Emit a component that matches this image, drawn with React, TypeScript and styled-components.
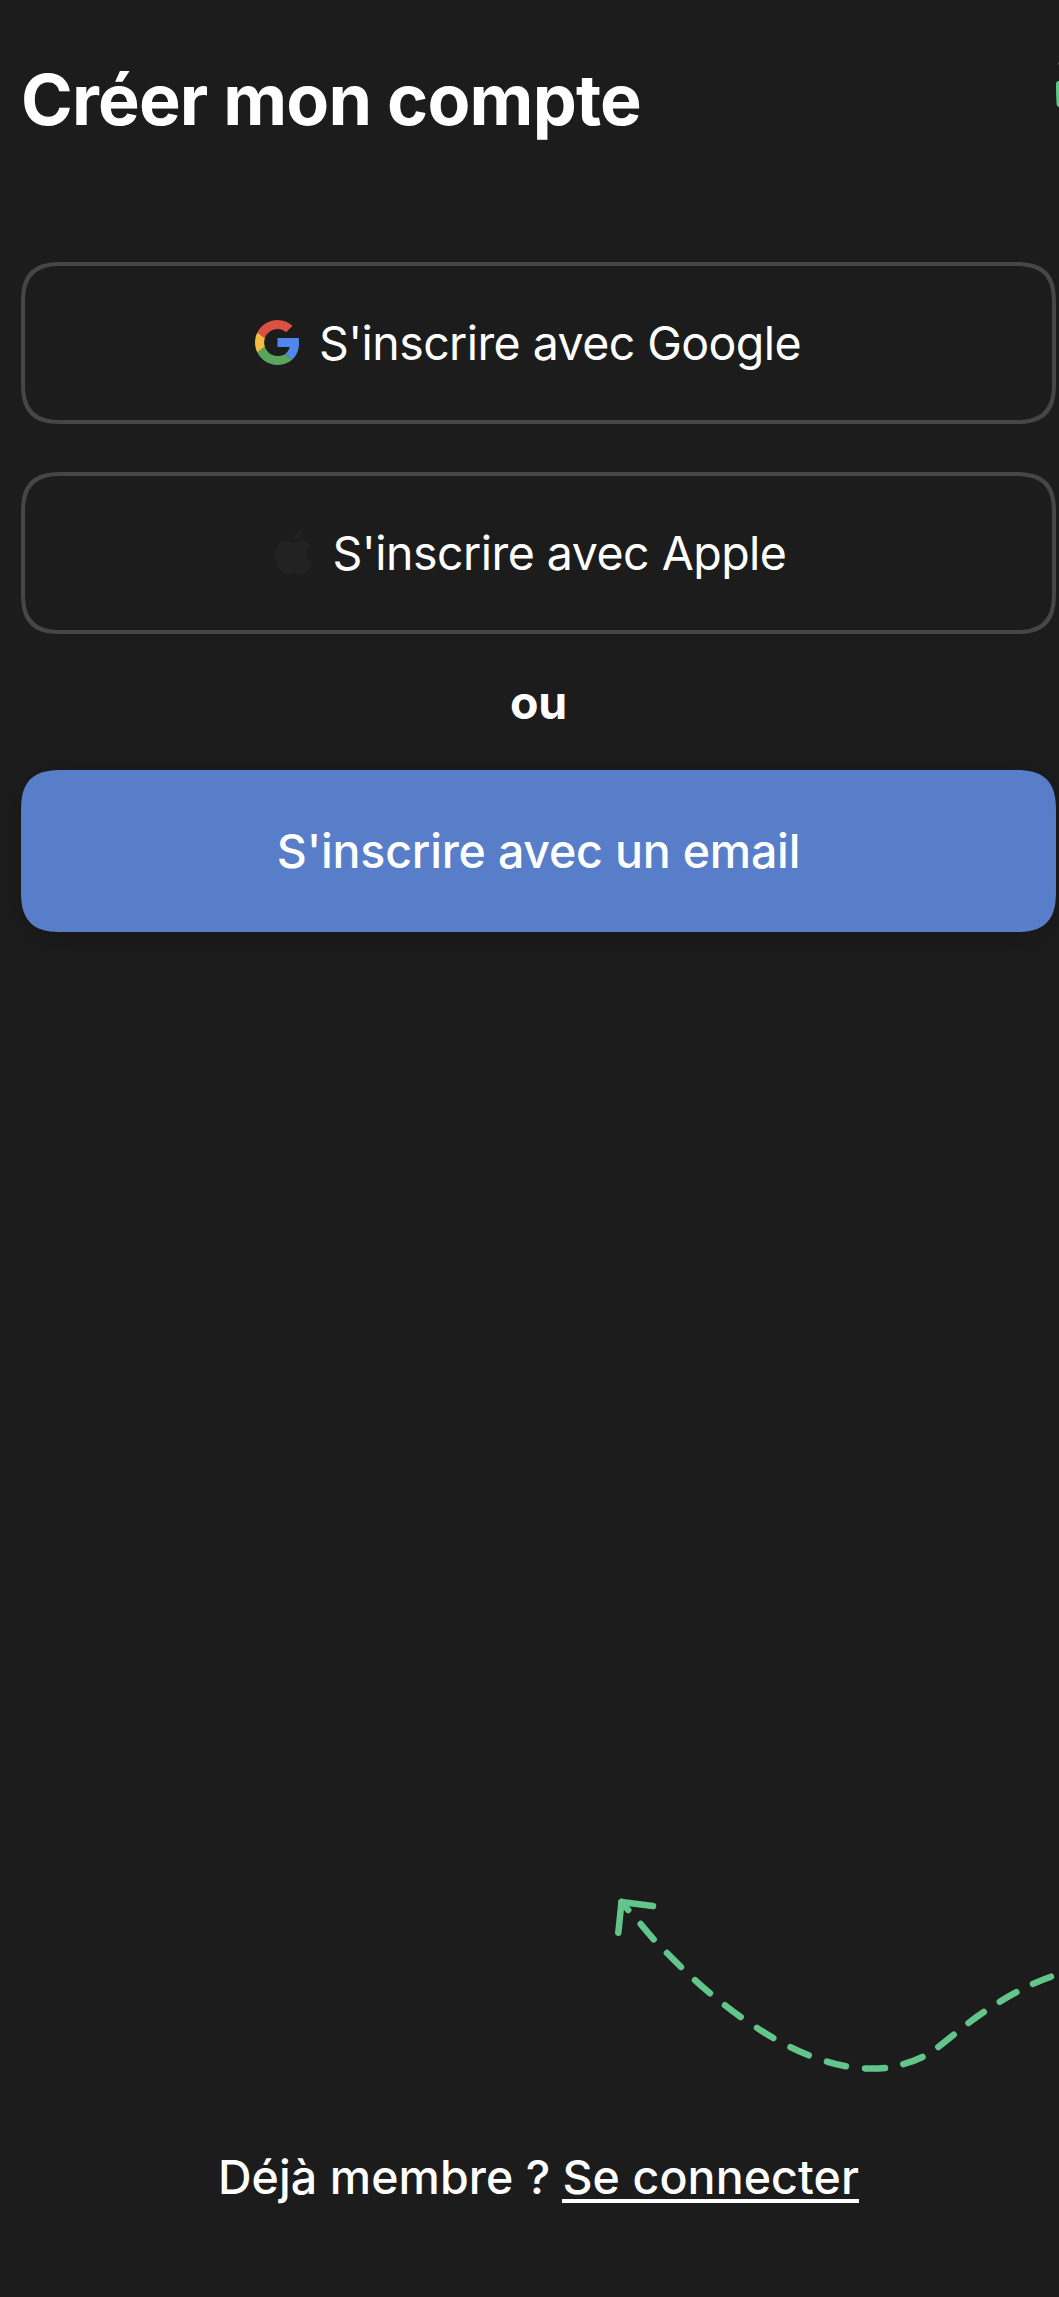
import React from "react";
import styled, { createGlobalStyle } from "styled-components";

const GlobalStyle = createGlobalStyle`
  * { box-sizing: border-box; }
  body {
    margin: 0;
    background: #1c1c1c;
    color: #fff;
    font-family: Inter, "Liberation Sans", sans-serif;
  }
`;

const Screen = styled.main`
  position: relative;
  display: flex;
  flex-direction: column;
  height: 2297px;
  padding: 58px 3px 0 21px;
  overflow: hidden;
`;

const Title = styled.h1`
  margin: 0 0 120px;
  font-size: 70px;
  line-height: 84px;
  font-weight: 700;
  letter-spacing: -0.8px;
  white-space: nowrap;
`;

const Providers = styled.div`
  display: flex;
  flex-direction: column;
  gap: 48px;
`;

const Button = styled.button<{ $gap?: number; $inset?: number; $primary?: boolean }>`
  display: flex;
  align-items: center;
  justify-content: center;
  gap: ${(p) => p.$gap ?? 0}px;
  width: 100%;
  height: 162px;
  padding: 0 ${(p) => p.$inset ?? 0}px 0 0;
  border: ${(p) => (p.$primary ? "none" : "4px solid #464646")};
  border-radius: 32px;
  background: ${(p) => (p.$primary ? "#587ec9" : "transparent")};
  box-shadow: ${(p) => (p.$primary ? "0 6px 30px rgba(0, 0, 0, 0.2)" : "none")};
  color: #fff;
  font-family: inherit;

  @supports (corner-shape: superellipse(1.5)) {
    border-radius: 43px;
    corner-shape: superellipse(1.5);
  }
`;

const Logo = styled.svg`
  flex: none;
  margin-bottom: 2px;
`;

const Label = styled.span<{ $weight?: number; $spacing?: number }>`
  font-size: 46.5px;
  line-height: 56px;
  font-weight: ${(p) => p.$weight ?? 400};
  letter-spacing: ${(p) => p.$spacing ?? 0}px;
  white-space: nowrap;
`;

const Divider = styled.div`
  display: flex;
  justify-content: center;
  padding: 40px 0;
`;

const Footer = styled.footer`
  display: flex;
  justify-content: center;
  gap: 12px;
  margin-top: 1217px;
`;

const LoginLink = styled.a`
  display: block;
  height: 54px;
  border-bottom: 4px solid #fff;
  color: #fff;
  text-decoration: none;
`;

const ArrowDrawing = styled.svg`
  position: absolute;
  left: 610px;
  top: 1890px;
`;

const EdgeDrawing = styled.svg`
  position: absolute;
  right: 0;
  top: 56px;
`;

const GoogleLogo = () => (
  <Logo width="45" height="45" viewBox="0 0 48 48">
    <path fill="#db5141" d="M24 9.5c3.54 0 6.71 1.22 9.21 3.6l6.85-6.85C35.9 2.38 30.47 0 24 0 14.62 0 6.51 5.38 2.56 13.22l7.98 6.19C12.43 13.72 17.74 9.5 24 9.5z" />
    <path fill="#5086ed" d="M46.98 24.55c0-1.57-.15-3.77-.38-5.25H24v9.5h12.94c-.58 2.96-2.26 5.7-4.78 7.4l7.73 6c4.51-4.18 7.09-10.36 7.09-17.65z" />
    <path fill="#f2bd42" d="M10.53 28.59c-.48-1.45-.76-2.99-.76-4.59s.27-3.14.76-4.59l-7.98-6.19C.92 16.46 0 20.12 0 24c0 3.88.92 7.54 2.56 10.78l7.97-6.19z" />
    <path fill="#59a55b" d="M24 48c6.48 0 11.93-2.13 15.89-5.81l-7.73-6c-2.15 1.45-4.92 2.3-8.16 2.3-6.26 0-11.57-4.22-13.47-9.91l-7.98 6.19C6.51 42.62 14.62 48 24 48z" />
  </Logo>
);

const AppleLogo = () => (
  <Logo width="37" height="45" viewBox="0 0 814 1000" preserveAspectRatio="none">
    <path fill="#222" d="M788.1 340.9c-5.8 4.5-108.2 62.2-108.2 190.5 0 148.4 130.3 200.9 134.2 202.2-.6 3.2-20.7 71.9-68.7 141.9-42.8 61.6-87.5 123.1-155.5 123.1s-85.5-39.5-164-39.5c-76.5 0-103.7 40.8-165.9 40.8s-105.6-57-155.5-127C46.7 790.7 0 663 0 541.8c0-194.4 126.4-297.5 250.8-297.5 66.1 0 121.2 43.4 162.7 43.4 39.5 0 101.1-46 176.3-46 28.5 0 130.9 2.6 198.3 99.2zm-234-181.5c31.1-36.9 53.1-88.1 53.1-139.3 0-7.1-.6-14.3-1.9-20.1-50.6 1.9-110.8 33.7-147.1 75.8-28.5 32.4-55.1 83.6-55.1 135.5 0 7.8 1.3 15.6 1.9 18.1 3.2.6 8.4 1.3 13.6 1.3 45.4 0 102.5-30.4 135.5-71.3z" />
  </Logo>
);

const DashedArrow = () => (
  <ArrowDrawing width="449" height="190" viewBox="610 1890 449 190" fill="none" stroke="#62c58a" strokeWidth="6.5" strokeLinecap="round" strokeLinejoin="round">
    <path d="M618.3 1932.7L621.5 1902L653 1906" />
    <path d="M621.5 1902L628.2 1910M640.7 1924Q647 1931.8 653.7 1939.3M667 1953L681 1967M695 1980.1Q702.4 1987 710 1993.2M725 2005.3Q732.7 2011.4 740.7 2017M757 2027.9Q765 2033.2 773.3 2038M790.5 2047.2Q799.5 2051.8 808.7 2055.3M827 2061.7Q836.5 2064.7 846 2066.3M865 2068.4Q875 2068.9 885 2068M903.3 2064.2Q913 2061.6 922.5 2057M938.3 2047L953.7 2034.7M968.5 2023Q976 2017.2 983.8 2012M999.8 2001.8Q1008 1996.7 1016.4 1992.2M1033 1983.9Q1042 1979.8 1051 1976.7" />
  </ArrowDrawing>
);

export default function App() {
  return (
    <>
      <GlobalStyle />
      <Screen>
        <Title>Créer mon compte</Title>
        <Providers>
          <Button $gap={19} $inset={21}>
            <GoogleLogo />
            <Label $spacing={-0.58}>S'inscrire avec Google</Label>
          </Button>
          <Button $gap={21} $inset={16}>
            <AppleLogo />
            <Label $spacing={-0.52}>S'inscrire avec Apple</Label>
          </Button>
        </Providers>
        <Divider>
          <Label $weight={700} $spacing={-0.3}>ou</Label>
        </Divider>
        <Button $primary>
          <Label $weight={500} $spacing={-0.2}>S'inscrire avec un email</Label>
        </Button>
        <Footer>
          <Label $weight={500} $spacing={0.08}>Déjà membre ?</Label>
          <LoginLink href="#">
            <Label $weight={500} $spacing={0.1}>Se connecter</Label>
          </LoginLink>
        </Footer>
        <EdgeDrawing width="4" height="56" viewBox="0 0 4 56" fill="none" stroke="#62c58a" strokeWidth="6.5" strokeLinecap="round">
          <path d="M4.2 28.3Q4.2 38 4.8 48" />
          <path d="M7 7.5L12 3" />
        </EdgeDrawing>
        <DashedArrow />
      </Screen>
    </>
  );
}
